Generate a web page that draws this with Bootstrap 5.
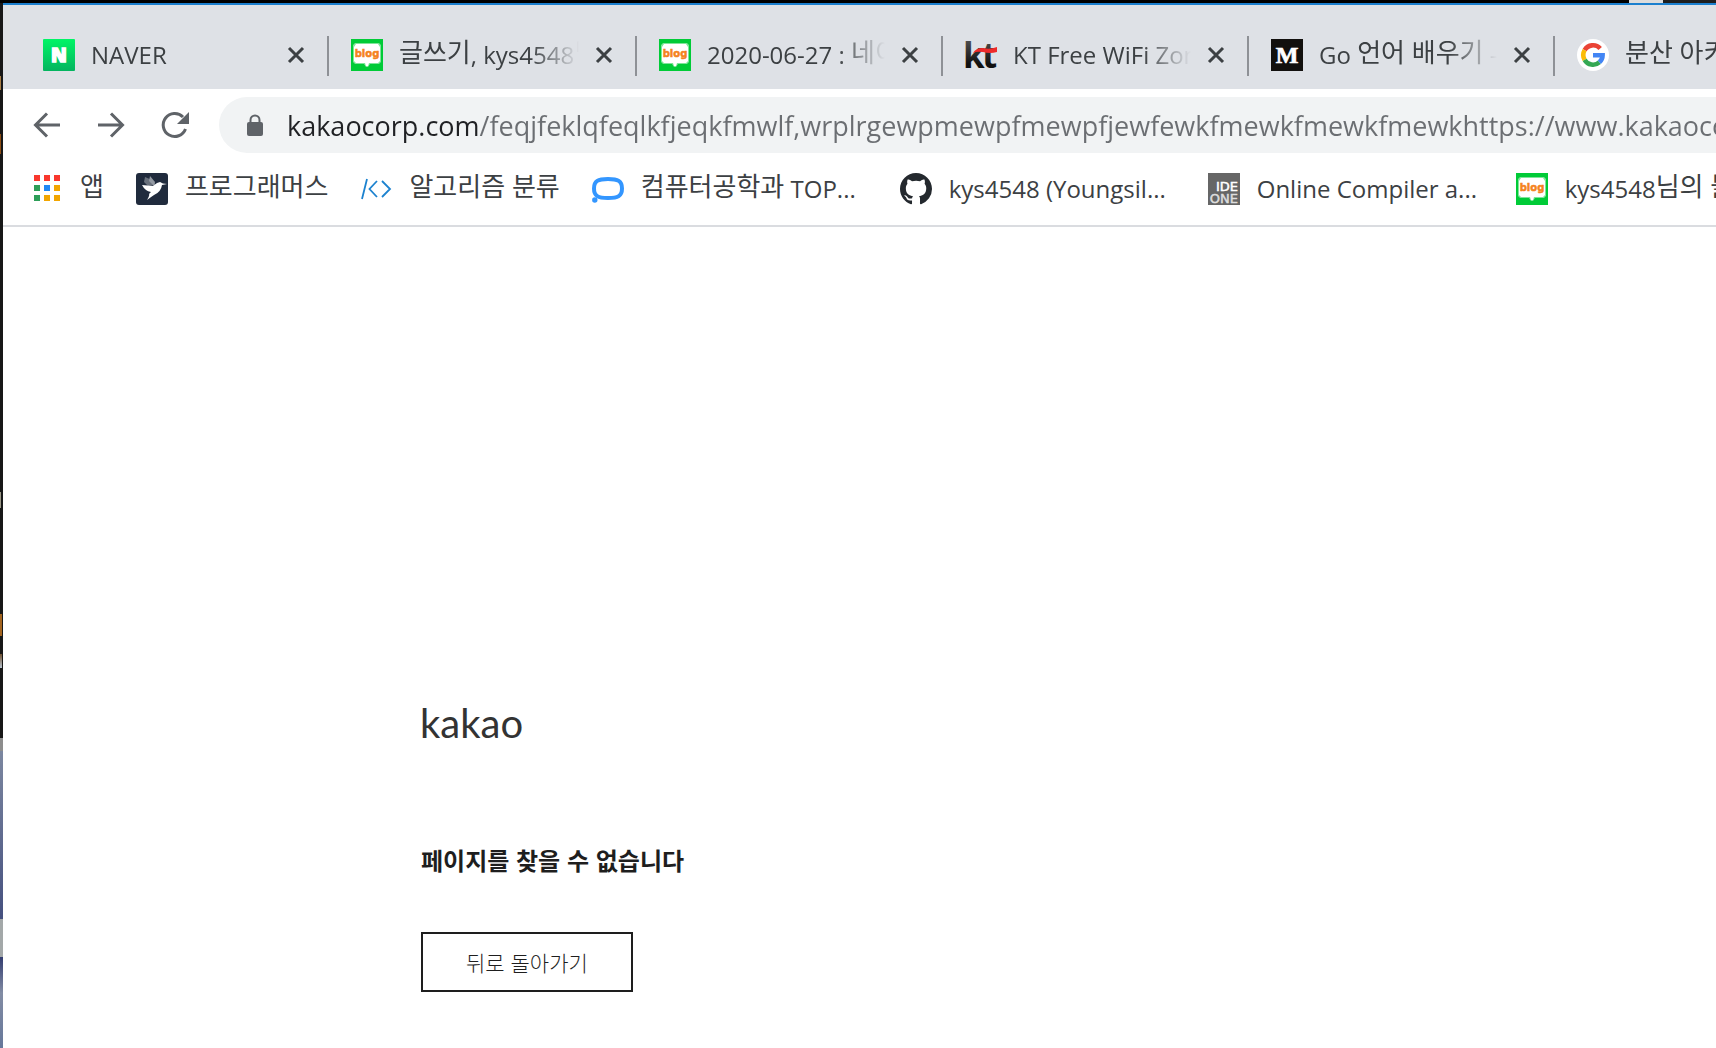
<!DOCTYPE html>
<html lang="ko">
<head>
<meta charset="utf-8">
<meta name="viewport" content="width=device-width, initial-scale=1">
<title>kakao</title>
<link href="https://cdn.jsdelivr.net/npm/bootstrap@5.3.0/dist/css/bootstrap.min.css" rel="stylesheet">
<style>
  body { font-family: "Open Sans", "Noto Sans CJK KR", sans-serif; font-size: 24px; line-height: 32px; color: #3c4043; background: #000; }
  .desktop-top { height: 3px; background: linear-gradient(#dcdcdc, #dcdcdc) calc(100% - 53px) 0 / 34px 3px no-repeat, linear-gradient(#1e1e1e, #1e1e1e) 100% 0 / 53px 3px no-repeat, #000; }
  .desktop-side { width: 3px; background:
    linear-gradient(#a87d45, #a87d45) 0 73px / 1px 14px no-repeat,
    linear-gradient(#8d4d14, #8d4d14) 0 131px / 1px 20px no-repeat,
    linear-gradient(#9a9686, #9a9686) 0 489px / 1px 16px no-repeat,
    linear-gradient(#a3641f, #a3641f) 0 611px / 2px 22px no-repeat,
    linear-gradient(#6f5030, #b8c4d0) 0 651px / 2px 14px no-repeat,
    linear-gradient(#171717 735px, #8d8d8d 735px 748px, #7c87a0 748px, #45507f 916px, #a3a8a9 916px 954px, #333d70 954px, #828ca4 990px, #66779a); }
  .browser { min-width: 0; border-top: 2px solid #1b7fce; }
  .tab-strip { background: #dee1e6; height: 84px; padding: 31px 0 13px 18px; overflow: hidden; }
  .browser-tab { width: 306px; padding: 0 22px 2px; border-right: 2px solid #8e9196; height: 40px; }
  .browser-tab:nth-child(-n+2) { width: 308px; }
  .tab-label { min-width: 0; color: inherit; -webkit-mask-image: linear-gradient(90deg, #000 calc(100% - 48px), transparent); }
  .tab-label, .bm-link { text-decoration: none; white-space: nowrap; overflow: hidden; line-height: 32px; }
  .favi { width: 32px; height: 32px; flex: none; }
  .ko { font-size: 26px; line-height: 24px; vertical-align: 2px; word-spacing: normal; }
  .plain-btn { border: 0; background: none; padding: 0; display: flex; color: #5f6368; }
  .toolbar { height: 64px; padding: 8px 0 0 28px; background: #fff; }
  .omnibox { height: 56px; border-radius: 28px 0 0 28px; background: #f1f3f4; padding-left: 24px; margin-left: 28px; min-width: 0; }
  .address { border: 0; outline: 0; padding: 0; height: 48px; font-size: 27px; color: transparent; margin-left: 20px;
    background: linear-gradient(90deg, #202124 192px, #6b6e72 192px); -webkit-background-clip: text; background-clip: text; }
  .bookmarks { height: 74px; padding: 20px 0 0 28px; background: #fff; border-bottom: 2px solid #dadce0; overflow: hidden; }
  .bm-link { color: #3c4043; height: 32px; gap: 17px; margin-right: 32px; flex: none; }
  .bm-long { width: 276px; }
  .site { background: #fff; padding: 468px 24px 50px 417px; }
  .brand-word { font-family: Lato, sans-serif; font-size: 40px; line-height: 56px; color: #333; }
  .notice { font-family: "Noto Sans CJK KR", sans-serif; font-size: 24px; line-height: 36px; font-weight: 700; color: #1e1e1e; margin: 91px 0 54px 1px; }
  .back-btn { font-family: "Noto Sans CJK KR", sans-serif; font-size: 21px; font-weight: 300; line-height: 28px; padding: 14px 43px; border: 2px solid #1e1e1e; border-radius: 0; color: #1e1e1e; margin-left: 1px; }
</style>
<script src="https://cdn.jsdelivr.net/npm/bootstrap@5.3.0/dist/js/bootstrap.bundle.min.js" defer></script>
</head>
<body class="min-vh-100 d-flex flex-column overflow-x-hidden">
<svg width="0" height="0" class="position-absolute" aria-hidden="true">
  <symbol id="blog" viewBox="0 0 32 32">
    <rect width="32" height="32" fill="#00cb37"/>
    <path d="M4 4h24l2 2v17l-2 2H19l-2 3h-2l-2-3H4l-2-2V6z" fill="#7fe49a"/>
    <path d="M5 5h22l2 3v14l-2 2H18l-1 3h-2l-1-3H5l-2-2V8z" fill="#fff"/>
    <text x="16" y="18" text-anchor="middle" font-family="DejaVu Sans" font-size="10" font-weight="700" fill="#f58220" stroke="#f58220" stroke-width=".5">blog</text>
  </symbol>
  <symbol id="close" viewBox="0 0 18 18"><path d="M2 2l14 14M16 2L2 16" stroke="#3c4043" stroke-width="3" fill="none"/></symbol>
</svg>
<div class="desktop-top"></div>
<div class="d-flex flex-grow-1">
  <div class="desktop-side flex-shrink-0"></div>
  <div class="browser flex-grow-1 d-flex flex-column">
    <nav class="tab-strip d-flex" aria-label="탭">
      <div class="browser-tab d-flex align-items-center flex-shrink-0">
        <svg class="favi" viewBox="0 0 32 32"><defs><linearGradient id="ng" x2="0" y2="1"><stop stop-color="#00f566"/><stop offset="1" stop-color="#04b45f"/></linearGradient></defs><rect width="32" height="32" rx="1" fill="url(#ng)"/><text x="16" y="23" text-anchor="middle" font-family="Open Sans" font-weight="800" font-size="19" fill="#fff" stroke="#fff" stroke-width="1.4">N</text></svg>
        <a href="#" class="tab-label flex-grow-1 mx-3">NAVER</a>
        <button class="plain-btn" aria-label="닫기"><svg width="18" height="18"><use href="#close"/></svg></button>
      </div>
      <div class="browser-tab d-flex align-items-center flex-shrink-0">
        <svg class="favi"><use href="#blog"/></svg>
        <a href="#" class="tab-label flex-grow-1 mx-3"><span class="ko">글쓰기</span>, kys4548<span class="ko">님</span></a>
        <button class="plain-btn" aria-label="닫기"><svg width="18" height="18"><use href="#close"/></svg></button>
      </div>
      <div class="browser-tab d-flex align-items-center flex-shrink-0">
        <svg class="favi"><use href="#blog"/></svg>
        <a href="#" class="tab-label flex-grow-1 mx-3">2020-06-27 : <span class="ko">네이</span></a>
        <button class="plain-btn" aria-label="닫기"><svg width="18" height="18"><use href="#close"/></svg></button>
      </div>
      <div class="browser-tab d-flex align-items-center flex-shrink-0">
        <svg class="favi" viewBox="0 0 32 32"><defs><linearGradient id="kg" x2="0" y2="1"><stop stop-color="#666"/><stop offset=".7" stop-color="#111"/></linearGradient></defs><text x="-2" y="29" font-family="Open Sans" font-weight="700" font-size="35" fill="url(#kg)">k</text><text x="17" y="29" font-family="Open Sans" font-weight="700" font-size="35" fill="url(#kg)">t</text><path d="M8 14q3-5 10-5 7 2 14-1v5q-7 2-14 0-6-1-10 1z" fill="#ee2a2a"/></svg>
        <a href="#" class="tab-label flex-grow-1 mx-3">KT Free WiFi Zon</a>
        <button class="plain-btn" aria-label="닫기"><svg width="18" height="18"><use href="#close"/></svg></button>
      </div>
      <div class="browser-tab d-flex align-items-center flex-shrink-0">
        <svg class="favi" viewBox="0 0 32 32"><rect width="32" height="32" fill="#12100e"/><text x="16" y="24" text-anchor="middle" font-family="Liberation Serif" font-weight="700" font-size="24" fill="#fff" stroke="#fff" stroke-width=".7">M</text></svg>
        <a href="#" class="tab-label flex-grow-1 mx-3">Go <span class="ko">언어 배우기</span> -</a>
        <button class="plain-btn" aria-label="닫기"><svg width="18" height="18"><use href="#close"/></svg></button>
      </div>
      <div class="browser-tab d-flex align-items-center flex-shrink-0">
        <svg class="favi" viewBox="0 0 32 32"><circle cx="16" cy="16" r="16" fill="#fff"/><g fill="none" stroke-width="4.6"><path d="M23.2 9.5A9.7 9.7 0 0 0 7.6 11.2" stroke="#ea4335"/><path d="M7.6 11.2a9.7 9.7 0 0 0 0 9.6" stroke="#fbbc05"/><path d="M7.6 20.8a9.7 9.7 0 0 0 14.8 2.5" stroke="#34a853"/><path d="M22.4 23.3A9.7 9.7 0 0 0 25.6 16.2H16" stroke="#4285f4"/></g></svg>
        <a href="#" class="tab-label flex-grow-1 mx-3"><span class="ko">분산 아키</span></a>
      </div>
    </nav>
    <div class="toolbar d-flex align-items-start">
      <div class="d-flex align-items-center h-100 gap-4 flex-shrink-0">
        <button class="plain-btn me-2" aria-label="뒤로"><svg width="32" height="32" fill="none" stroke="currentColor" stroke-width="3"><path d="M29 16H5M16 4.500L4.500 16 16 27.500"/></svg></button>
        <button class="plain-btn me-2" aria-label="앞으로"><svg width="32" height="32" fill="none" stroke="currentColor" stroke-width="3"><path d="M3 16h24M16 4.500L27.500 16 16 27.500"/></svg></button>
        <button class="plain-btn" aria-label="새로고침"><svg width="32" height="32"><path d="M26.500 20A11.500 11.500 0 1 1 24 8" fill="none" stroke="currentColor" stroke-width="3"/><path d="M30 3v12H18z" fill="currentColor"/></svg></button>
      </div>
      <div class="omnibox flex-grow-1 d-flex align-items-center">
        <svg class="flex-shrink-0" width="24" height="24" viewBox="0 0 24 24"><rect x="4" y="9" width="16" height="14" rx="2" fill="#5f6368"/><path d="M7.500 10V7a4.500 4.500 0 0 1 9 0v3" fill="none" stroke="#5f6368" stroke-width="2"/></svg>
        <input class="address flex-grow-1 w-100" type="text" aria-label="주소" value="kakaocorp.com/feqjfeklqfeqlkfjeqkfmwlf,wrplrgewpmewpfmewpfjewfewkfmewkfmewkfmewkhttps://www.kakaocorp.com">
      </div>
    </div>
    <nav class="bookmarks d-flex" aria-label="북마크">
      <a href="#" class="bm-link d-flex align-items-center"><svg class="favi" viewBox="0 0 32 32"><path d="M3 2h6v6H3zM13 2h6v6h-6zM23 2h6v6h-6z" fill="#f9372d"/><path d="M3 12h6v6H3zM3 22h6v6H3z" fill="#2e9e58"/><path d="M13 12h6v6h-6z" fill="#1e88f5"/><path d="M23 12h6v6h-6zM13 22h6v6h-6zM23 22h6v6h-6z" fill="#f2a500"/></svg><span><span class="ko">앱</span></span></a>
      <a href="#" class="bm-link d-flex align-items-center"><svg class="favi" viewBox="0 0 32 32"><rect width="32" height="32" rx="3" fill="#202b3d"/><path d="M9 4l7 3 4 5-8 1-4-4z" fill="#69717d"/><path d="M14 3l5 6-1 4-5-5z" fill="#949aa3"/><path d="M6 12l11 1 4-3 3-1 3 1.500 4 .5-5 1q-1 7-8 10-3 2-7 5 3-5 2-6l2-2q-6-1-9-7z" fill="#fff"/></svg><span><span class="ko">프로그래머스</span></span></a>
      <a href="#" class="bm-link d-flex align-items-center"><svg class="favi" viewBox="0 0 32 32" fill="none" stroke="#1c82cf" stroke-width="1.800"><path d="M7 6L2 26M17 8L9.500 16 17 24M22 8l8 8-8 8"/></svg><span><span class="ko">알고리즘 분류</span></span></a>
      <a href="#" class="bm-link bm-long d-flex align-items-center"><svg class="favi" viewBox="0 0 32 32"><path d="M16 6C26 6 30 8 30 15.500S26 25 16 25 2 23 2 15.500 6 6 16 6z" fill="none" stroke="#3396ff" stroke-width="4"/><circle cx="2.800" cy="27" r="2.700" fill="#3396ff"/></svg><span><span class="ko">컴퓨터공학과</span> TOP...</span></a>
      <a href="#" class="bm-link bm-long d-flex align-items-center"><svg class="favi" viewBox="0 0 16 16"><path fill="#24292e" d="M8 0C3.580 0 0 3.580 0 8c0 3.540 2.290 6.530 5.470 7.590.4.070.55-.17.55-.38 0-.19-.01-.82-.01-1.490-2.010.37-2.530-.49-2.690-.94-.09-.23-.48-.94-.82-1.130-.28-.15-.68-.52-.01-.53.63-.01 1.080.58 1.230.82.72 1.210 1.870.87 2.330.66.07-.52.28-.87.51-1.070-1.780-.2-3.640-.89-3.640-3.950 0-.87.31-1.590.82-2.150-.08-.2-.36-1.020.08-2.120 0 0 .67-.21 2.200.82.64-.18 1.320-.27 2-.27s1.360.09 2 .27c1.530-1.040 2.200-.82 2.200-.82.44 1.100.16 1.920.08 2.120.51.56.82 1.270.82 2.150 0 3.070-1.870 3.750-3.650 3.950.29.25.54.73.54 1.480 0 1.070-.01 1.930-.01 2.200 0 .21.15.46.55.38A8.010 8.010 0 0 0 16 8c0-4.420-3.580-8-8-8z"/></svg><span>kys4548 (Youngsil...</span></a>
      <a href="#" class="bm-link bm-long d-flex align-items-center"><svg class="favi" viewBox="0 0 32 32" font-family="DejaVu Sans" font-size="13"><rect width="32" height="32" fill="#666"/><text x="30" y="18" text-anchor="end" fill="#fff" stroke="#fff" stroke-width=".5">IDE</text><text x="30" y="30" text-anchor="end" fill="#ddd" stroke="#ddd" stroke-width=".5">ONE</text></svg><span>Online Compiler a...</span></a>
      <a href="#" class="bm-link bm-long d-flex align-items-center"><svg class="favi"><use href="#blog"/></svg><span>kys4548<span class="ko">님의 블</span></span></a>
    </nav>
    <main class="site flex-grow-1">
      <div class="brand-word">kakao</div>
      <h1 class="notice">페이지를 찾을 수 없습니다</h1>
      <button class="btn back-btn">뒤로 돌아가기</button>
    </main>
  </div>
</div>
</body>
</html>
